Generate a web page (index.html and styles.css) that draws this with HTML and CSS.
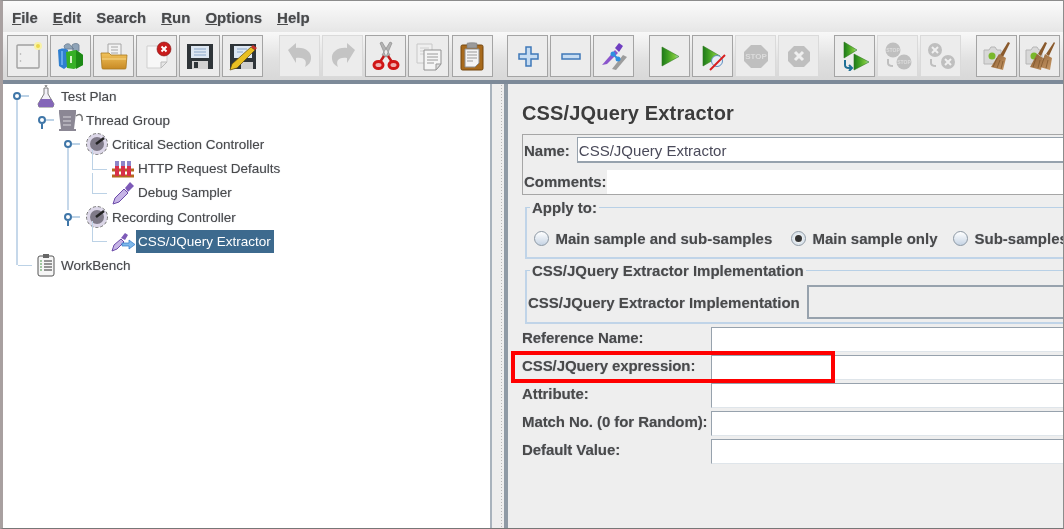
FILE: index.html
```html
<!DOCTYPE html>
<html lang="en">
<head>
<meta charset="utf-8">
<title>JMeter CSS/JQuery Extractor</title>
<link rel="stylesheet" href="styles.css">
</head>
<body>
<svg class="defs" aria-hidden="true"><defs>
  <linearGradient id="play" x1="0" x2="1" y1="0" y2="0"><stop offset="0" stop-color="#1f7a1a"/><stop offset=".35" stop-color="#3f9e22"/><stop offset=".75" stop-color="#7cc63c"/><stop offset="1" stop-color="#a6dcd0"/></linearGradient>
  <linearGradient id="folder" x1="0" x2="0" y1="0" y2="1"><stop offset="0" stop-color="#f2c35c"/><stop offset="1" stop-color="#c88a24"/></linearGradient>
  <linearGradient id="bristle" x1="0" x2="1" y1="0" y2="1"><stop offset="0" stop-color="#8a5c30"/><stop offset="1" stop-color="#c99a68"/></linearGradient>
</defs></svg>
<div class="app">
  <nav class="menubar">
    <span class="menu"><u>F</u>ile</span>
    <span class="menu"><u>E</u>dit</span>
    <span class="menu">Search</span>
    <span class="menu"><u>R</u>un</span>
    <span class="menu"><u>O</u>ptions</span>
    <span class="menu"><u>H</u>elp</span>
  </nav>
  <div class="toolbar">
    <div class="group lead">
      <button class="tool"><svg viewBox="0 0 30 30"><rect x="4" y="4" width="22" height="23" rx="1" fill="#eeeeee" stroke="#a0a0a0" stroke-width="1.400"/><circle cx="7.500" cy="13" r=".8" fill="#aaa"/><circle cx="7.500" cy="20" r=".8" fill="#aaa"/><circle cx="25" cy="5" r="4" fill="#f8f2a8"/><circle cx="25" cy="5" r="2" fill="#ecd84a"/></svg></button>
      <button class="tool"><svg viewBox="0 0 30 30"><path d="M8 5c2-3 6-3 7 0l3 3H9zM16 4c2-2 6-2 7 0v6h-6z" fill="#8fa4b8" stroke="#6c7f92" stroke-width=".8"/><path d="M2 9c3-2 7-2 10 0v16l-4 3-5-3z" fill="#2f7fd0"/><path d="M5 10h2v14H5z" fill="#63a8ea"/><path d="M10 11l10-2 7 5v10l-9 4-7-1z" fill="#36b026"/><path d="M20 9l7 5v10l-7 4z" fill="#1d8a16"/><rect x="14" y="15" width="2" height="7" fill="#d8f3c8"/></svg></button>
      <button class="tool"><svg viewBox="0 0 30 30"><path d="M9 3h13v12H9z" fill="#f3f3f3" stroke="#a6a6a6"/><path d="M12 6h7M12 9h7M12 12h7" stroke="#a6a6a6"/><path d="M2 12h8l2 2h16l-1 13c0 1-1 1-2 1H5c-1 0-2 0-2-1z" fill="url(#folder)" stroke="#a87920" stroke-width=".8"/><path d="M3 18h24" stroke="#f8d88a"/></svg></button>
      <button class="tool"><svg viewBox="0 0 30 30"><path d="M5 5h14l6 5v11l-6 6H5z" fill="#f7f7f7" stroke="#cfcfcf"/><path d="M19 27v-6h6z" fill="#e6e6e6" stroke="#bbb"/><circle cx="22" cy="8" r="7" fill="#c81c1c"/><circle cx="22" cy="8" r="7" fill="none" stroke="#7d1010" stroke-width=".6"/><path d="M19.500 5.500l5 5m0-5l-5 5" stroke="#fff" stroke-width="2"/></svg></button>
      <button class="tool"><svg viewBox="0 0 30 30"><path d="M2 3h26v25H2z" fill="#2f3539"/><rect x="6" y="5" width="18" height="12" fill="#dde7f2"/><path d="M9 8h12M9 11h12M9 14h12" stroke="#8aa6c8"/><rect x="7" y="20" width="16" height="8" fill="#d2d2d2"/><rect x="9" y="21" width="4" height="6" fill="#2f3539"/></svg></button>
      <button class="tool"><svg viewBox="0 0 30 30"><path d="M2 3h26v25H2z" fill="#2f3539"/><rect x="6" y="5" width="18" height="12" fill="#dde7f2"/><path d="M9 8h10M9 11h6" stroke="#8aa6c8"/><rect x="13" y="21" width="12" height="7" fill="#cfcfcf"/><path d="M2 29l2-6L23 6l4 3L9 27z" fill="#e9bf22" stroke="#5f4a0e" stroke-width=".7"/><path d="M23 6l2-2 4 3-2 2z" fill="#c8352b"/></svg></button>
    </div>
    <div class="group">
      <button class="tool off"><svg viewBox="0 0 30 30"><path d="M3 9l8-7v5c9-1 16 4 15 11-.3 3-2 6-6 8 2-5 1-10-9-9v5z" fill="#c4c4c4"/></svg></button>
      <button class="tool off"><svg viewBox="0 0 30 30"><path d="M27 9l-8-7v5C10 6 3 11 4 18c.3 3 2 6 6 8-2-5-1-10 9-9v5z" fill="#c4c4c4"/></svg></button>
      <button class="tool on"><svg viewBox="0 0 30 30"><path d="M9 2l6 14 4-2L11 1zM21 2l-6 14-4-2 8-13z" fill="#b4b4b4" stroke="#8e8e8e" stroke-width=".7"/><path d="M13 15l-4 6M17 15l4 6" stroke="#c41818" stroke-width="2.500"/><ellipse cx="7.500" cy="24" rx="4.500" ry="3.500" fill="#f0b0b0" stroke="#d01616" stroke-width="3"/><ellipse cx="22.500" cy="24" rx="4.500" ry="3.500" fill="#f0b0b0" stroke="#d01616" stroke-width="3"/></svg></button>
      <button class="tool on"><svg viewBox="0 0 30 30"><path d="M3 3h15v19H3z" fill="#efefef" stroke="#c8c8c8"/><path d="M6 7h9M6 10h9M6 13h4" stroke="#d0d0d0"/><path d="M10 9h17v14l-5 6H10z" fill="#f5f5f5" stroke="#919191"/><path d="M13 13h11M13 16h11M13 19h11M13 22h7" stroke="#9a9a9a"/><path d="M22 29v-6h5z" fill="#ddd" stroke="#999"/></svg></button>
      <button class="tool on"><svg viewBox="0 0 30 30"><rect x="4" y="4" width="22" height="25" rx="1.500" fill="#a86a1c" stroke="#74460e"/><path d="M8 8h14v14l-4 4H8z" fill="#f4f4f4" stroke="#8f8f8f"/><path d="M10 2.500c0-1 10-1 10 0V7H10z" fill="#9a9a9a" stroke="#777" stroke-width=".6"/><path d="M10 11h10M10 14h10M10 17h10M10 20h6" stroke="#999"/></svg></button>
    </div>
    <div class="group">
      <button class="tool on"><svg viewBox="0 0 30 30"><path d="M13 6h5v7h7v5h-7v7h-5v-7H6v-5h7z" fill="#c6dcf2" stroke="#3f78b8" stroke-width="1.500"/></svg></button>
      <button class="tool on"><svg viewBox="0 0 30 30"><rect x="6" y="13" width="18" height="5" fill="#c6dcf2" stroke="#3f78b8" stroke-width="1.500"/></svg></button>
      <button class="tool on"><svg viewBox="0 0 30 30"><path d="M3 24L16 9l3 3L8 23z" fill="#8a55cc"/><path d="M16 7l4-5 4 3-4 6z" fill="#6f3ec0"/><path d="M13 28l11-14 4 2-11 13z" fill="#9c9c9c"/><circle cx="14" cy="13" r="2.500" fill="#2f8fe0"/><circle cx="19" cy="18" r="2.500" fill="#2f8fe0"/><path d="M14 13l5 5" stroke="#2f8fe0" stroke-width="2"/></svg></button>
    </div>
    <div class="group">
      <button class="tool on"><svg viewBox="0 0 30 30"><path d="M7 6l17 9.500L7 25z" fill="url(#play)" stroke="#2f7a1c" stroke-width=".6"/></svg></button>
      <button class="tool on"><svg viewBox="0 0 30 30"><path d="M5 5l17 10L5 25z" fill="url(#play)" stroke="#2f7a1c" stroke-width=".6"/><circle cx="19" cy="20" r="5.500" fill="#e6eef6" stroke="#5f8fc0"/><path d="M12 29L27 14" stroke="#d82020" stroke-width="2"/></svg></button>
      <button class="tool off"><svg viewBox="0 0 30 30"><path d="M10 4h10l7 7v9l-7 7H10l-7-7v-9z" fill="#bfbfbf"/><text x="15" y="18" class="stoptext">STOP</text></svg></button>
      <button class="tool off"><svg viewBox="0 0 30 30"><path d="M10 5h10l6 6v9l-6 6H10l-6-6v-9z" fill="#bfbfbf"/><path d="M11 11l8 8m0-8l-8 8" stroke="#efefef" stroke-width="3"/></svg></button>
    </div>
    <div class="group">
      <button class="tool on"><svg viewBox="0 0 30 30"><path d="M4 1l13 8-13 8z" fill="url(#play)" stroke="#2f7a1c" stroke-width=".6"/><path d="M14 13l15 8-15 8z" fill="url(#play)" stroke="#2f7a1c" stroke-width=".6"/><path d="M5 19v5c0 2 2 3 4 3h2M9 24l3 3-3 3" fill="none" stroke="#1f6f96" stroke-width="2"/></svg></button>
      <button class="tool off"><svg viewBox="0 0 30 30"><circle cx="10" cy="9" r="7.500" fill="#bfbfbf"/><circle cx="21" cy="21" r="7.500" fill="#bfbfbf"/><text x="10" y="11" class="stopsmall">STOP</text><text x="21" y="23" class="stopsmall">STOP</text><path d="M5 18v4c0 2 1 3 5 3" fill="none" stroke="#bfbfbf" stroke-width="2"/></svg></button>
      <button class="tool off"><svg viewBox="0 0 30 30"><circle cx="9" cy="9" r="7" fill="#bfbfbf"/><circle cx="22" cy="21" r="7" fill="#bfbfbf"/><path d="M6 6l6 6m0-6l-6 6M19 18l6 6m0-6l-6 6" stroke="#efefef" stroke-width="2"/><path d="M5 18v4c0 2 1 3 5 3" fill="none" stroke="#bfbfbf" stroke-width="2"/></svg></button>
    </div>
    <div class="group">
      <button class="tool on"><svg viewBox="0 0 30 30"><path d="M3 9h5l2-3h4l2 3h4v11l-4 3H3z" fill="#d8d8d8" stroke="#b6b6b6"/><circle cx="11" cy="15" r="3.500" fill="#7ab82c"/><path d="M27 1l2 1-7 14-3-2z" fill="#8a5a2c"/><path d="M18 13l7 4-3 12-12-3z" fill="url(#bristle)"/><path d="M16 17l-4 9M19 19l-3 8M22 20l-2 8" stroke="#7a5228" stroke-width=".7"/></svg></button>
      <button class="tool on"><svg viewBox="0 0 30 30"><path d="M1 9h5l2-3h4l2 3h3v11l-4 3H1z" fill="#d8d8d8" stroke="#b6b6b6"/><circle cx="9" cy="15" r="3.500" fill="#7ab82c"/><path d="M20 1l2 1-6 13-3-2zM29 1l1 1-6 13-3-2z" fill="#8a5a2c"/><path d="M12 13l6 4-2 12-11-3zM20 13l7 4-2 12-10-3z" fill="url(#bristle)"/><path d="M11 17l-3 9M15 19l-2 8M19 17l-3 9M23 19l-2 8" stroke="#7a5228" stroke-width=".7"/></svg></button>
    </div>
  </div>
  <div class="panes">
    <aside class="tree">
      <div class="node l0"><span class="handle"></span><svg class="ico" viewBox="0 0 24 24"><path d="M11 1l1 2 1-2M10 4h4v6l6 10-1 3H5l-1-3 6-10z" fill="#f2f0f7" stroke="#7c7c7c"/><path d="M7 15h10l3 5-1 3H5l-1-3z" fill="#8466b8"/></svg><span class="label">Test Plan</span></div>
      <div class="node l1"><span class="handle"></span><svg class="ico" viewBox="0 0 24 24"><path d="M0 2h17v3l-2 16h2v2H0v-2h2L0 5z" fill="#8b8794"/><path d="M4 9h8M4 13h8M4 17h8" stroke="#d8d6dc"/><path d="M17 8c4-3 7-1 6 5" fill="none" stroke="#777" stroke-width="1.500"/></svg><span class="label">Thread Group</span></div>
      <div class="node l2"><span class="handle"></span><svg class="ico" viewBox="0 0 24 24"><circle cx="12" cy="12" r="10.500" fill="#dcd7e8" stroke="#777" stroke-dasharray="3 2"/><circle cx="12" cy="12" r="7" fill="#7f7a88"/><path d="M11 12l8-6" stroke="#222" stroke-width="2.500"/></svg><span class="label">Critical Section Controller</span></div>
      <div class="node l3 branch"><svg class="ico" viewBox="0 0 24 24"><path d="M1 13h22M1 19h22" stroke="#b4671e" stroke-width="3"/><path d="M6 4v15M12 4v15M18 4v15" stroke="#d8304a" stroke-width="4"/><path d="M6 4v5M12 4v5M18 4v5" stroke="#8d86c8" stroke-width="4"/></svg><span class="label">HTTP Request Defaults</span></div>
      <div class="node l3 branch"><svg class="ico" viewBox="0 0 24 24"><path d="M2 23l2-6 9-9 4 4-9 9z" fill="#c6b4e6" stroke="#6b4aa8"/><path d="M14 7l5-6 4 4-6 6z" fill="#7d5ab8"/></svg><span class="label">Debug Sampler</span></div>
      <div class="node l2"><span class="handle"></span><svg class="ico" viewBox="0 0 24 24"><circle cx="12" cy="12" r="10.500" fill="#dcd7e8" stroke="#777" stroke-dasharray="3 2"/><circle cx="12" cy="12" r="7" fill="#7f7a88"/><path d="M11 12l8-6" stroke="#222" stroke-width="2.500"/></svg><span class="label">Recording Controller</span></div>
      <div class="node l3 branch last"><svg class="ico" viewBox="0 0 24 24"><path d="M1 22l2-6 7-6 3 3-7 7z" fill="#c6b4e6" stroke="#6b4aa8"/><path d="M10 9l4-5 3 2-3 5z" fill="#7d5ab8"/><path d="M11 14h7v-3l6 4.500-6 4.500v-3h-7z" fill="#7fb8ea" stroke="#2f7ac8" stroke-width=".7"/></svg><span class="label selected">CSS/JQuery Extractor</span></div>
      <div class="node l0 wb"><svg class="ico" viewBox="0 0 24 24"><rect x="4" y="3" width="16" height="20" rx="2" fill="#f6f6f6" stroke="#555"/><rect x="9" y="1" width="6" height="4" fill="#666"/><path d="M10 8h8M10 11h8M10 14h8M10 17h8" stroke="#333"/><path d="M6 8h2M6 11h2M6 14h2M6 17h2" stroke="#4a9a4a"/></svg><span class="label">WorkBench</span></div>
    </aside>
    <div class="splitter"></div>
    <main class="editor">
      <h1 class="title">CSS/JQuery Extractor</h1>
      <section class="namebox">
        <div class="namerow"><label class="lab">Name:</label><div class="input named">CSS/JQuery Extractor</div></div>
        <div class="commentrow"><label class="lab">Comments:</label><div class="comment"></div></div>
      </section>
      <fieldset class="fs apply">
        <legend>Apply to:</legend>
        <div class="radios">
          <span class="radio first"><i class="dot"></i>Main sample and sub-samples</span>
          <span class="radio second"><i class="dot checked"></i>Main sample only</span>
          <span class="radio third"><i class="dot"></i>Sub-samples only</span>
        </div>
      </fieldset>
      <fieldset class="fs impl">
        <legend>CSS/JQuery Extractor Implementation</legend>
        <div class="implrow"><label class="lab">CSS/JQuery Extractor Implementation</label><div class="select"></div></div>
      </fieldset>
      <div class="grid">
        <label class="lab">Reference Name:</label><div class="input"></div>
        <label class="lab">CSS/JQuery expression:</label><div class="input"></div>
        <label class="lab">Attribute:</label><div class="input"></div>
        <label class="lab">Match No. (0 for Random):</label><div class="input"></div>
        <label class="lab">Default Value:</label><div class="input"></div>
      </div>
      <div class="highlight"></div>
    </main>
  </div>
</div>
</body>
</html>
```
FILE: styles.css
```css
* { box-sizing: border-box; }
html, body { margin: 0; padding: 0; }
body { width: 1064px; height: 529px; overflow: hidden; background: #fff; font-family: "Liberation Sans", Arial, sans-serif; color: #3a3a3a; }
.defs { position: absolute; width: 0; height: 0; }
.app { width: 1064px; height: 529px; display: flex; flex-direction: column; border-top: 1px solid #8c8c8c; border-left: 3px solid #a8a0a0; border-right: 1px solid #8c8c8c; border-bottom: 1px solid #777; position: relative; overflow: hidden; filter: blur(.35px); }
.menubar { height: 31px; display: flex; align-items: center; padding: 2px 0 0 9px; gap: 15px; background: linear-gradient(#fbfbfb, #e6e6e6); font-size: 15px; font-weight: bold; color: #4a4a4a; text-shadow: 0 0 1px #8d98a8; flex: none; }
.toolbar { height: 48px; display: flex; padding: 3px 0 0 4px; gap: 14.7px; background: linear-gradient(#f8f8f8, #e0e0e0 60%, #d8d8d8); flex: none; }
.group { display: flex; gap: 2.1px; }
.lead { margin-right: 1px; }
.tool { width: 41px; height: 42px; padding: 4px 5px; border: 1px solid #a4a4a4; background: #ececec; display: flex; align-items: center; justify-content: center; }
.tool svg { width: 30px; height: 30px; display: block; flex: none; }
.tool.off { border-color: #dadada; }
.stoptext { font-size: 8px; font-weight: bold; fill: #dcdcdc; text-anchor: middle; font-family: "Liberation Sans", sans-serif; }
.stopsmall { font-size: 5px; font-weight: bold; fill: #dcdcdc; text-anchor: middle; font-family: "Liberation Sans", sans-serif; }
.panes { flex: 1; display: flex; min-height: 0; border-top: 4px solid #7d8a99; }
.tree { width: 489px; flex: none; background: #fff; border-right: 2px solid #a9b3bd; padding: 0 0 0 2px; font-size: 13.5px; color: #4a4a4a; }
.node { height: 24.200px; display: flex; align-items: center; position: relative; }
.ico { width: 24px; height: 24px; flex: none; }
.label { margin-left: 3px; text-shadow: 0 0 1px #a8b0c0; white-space: nowrap; }
.selected { background: #3d6a8e; color: #fff; padding: 4px 3px 4px 2px; margin-left: 1px; text-shadow: none; }
.handle { width: 8px; height: 8px; border: 2px solid #3f76a8; border-radius: 50%; background: #fff; flex: none; position: absolute; left: -21px; top: 8px; }
.handle::after { content: ""; position: absolute; left: 6px; top: 1px; width: 8px; height: 2px; background: #bcd2e6; }
.handle::before { content: ""; position: absolute; left: 1px; top: 6px; width: 2px; height: 5px; background: #3f76a8; }
.l0 { margin-left: 29px; }
.l1 { margin-left: 54px; }
.l2 { margin-left: 80px; }
.l3 { margin-left: 106px; }
.branch::before { content: ""; position: absolute; left: -19px; top: -8px; width: 14px; height: 20px; border-left: 1px solid #bcd2e6; border-bottom: 1px solid #bcd2e6; }
.l2::after { content: ""; position: absolute; left: -18px; top: 16px; width: 2px; height: 62px; background: #c6d8ea; }
.l2 ~ .l2::after, .wb::after { display: none; }
.l0:first-child::after { content: ""; position: absolute; left: -18px; top: 16px; width: 2px; height: 165px; background: #c6d8ea; }
.wb::before { content: ""; position: absolute; left: -16px; top: 12px; width: 14px; height: 1px; background: #bcd2e6; }
.splitter { width: 16px; flex: none; background: #eeeeee radial-gradient(#b8b8b8 35%, transparent 40%) 8px 0 / 3px 3px repeat-y; border-right: 4px solid #8f9aa5; }
.editor { flex: 1; min-width: 0; background: #eeeeee; padding: 0 0 0 14px; position: relative; overflow: hidden; font-size: 15px; font-weight: bold; }
.title { margin: 17px 0 0; font-size: 20px; line-height: 24px; font-weight: bold; color: #3c3c3c; letter-spacing: .15px; white-space: nowrap; }
.lab { color: #4a4a4a; white-space: nowrap; text-shadow: 0 0 1px #a0a8b8; }
.namebox { margin-top: 9px; height: 61px; width: 560px; border: 1px solid #a6a6a6; border-right: none; padding: 2px 0 0 1px; }
.namerow { display: flex; align-items: center; gap: 7px; height: 26px; }
.commentrow { display: flex; align-items: center; margin-top: 7px; height: 24px; }
.commentrow .lab { margin-bottom: 2px; }
.comment { flex: 1; height: 24px; background: #fff; }
.input { background: #fff; border: 1px solid #97a2ad; border-right: none; border-bottom-width: 2px; height: 26px; flex: 1; }
.named { font-weight: normal; color: #4a4a5a; font-size: 15px; line-height: 25px; padding-left: 1px; white-space: nowrap; }
.fs { margin: 0 0 0 3px; padding: 0; border: none; border-top: 1px solid #b8d0e6; border-left: 2px solid #c0d4e8; border-bottom: 2px solid #c0d4e8; width: 560px; min-width: 0; }
.fs legend { padding: 0 2px; margin-left: 3px; font-size: 15px; font-weight: bold; color: #4a4a4a; text-shadow: 0 0 1px #a0a8b8; white-space: nowrap; }
.apply { margin-top: 4px; height: 60px; }
.radios { display: flex; align-items: center; padding: 14px 0 0 7px; }
.radio { display: flex; align-items: center; gap: 6.500px; white-space: nowrap; text-shadow: 0 0 1px #a0a8b8; color: #4a4a4a; flex: none; }
.first { width: 257px; }
.second { width: 162px; }
.dot { width: 15px; height: 15px; border-radius: 50%; border: 1px solid #8c98a4; background: linear-gradient(#ffffff, #c6d4e4); flex: none; position: relative; }
.checked { background: #f0f0f0; box-shadow: inset 0 0 0 2px #dde6ee; }
.checked::after { content: ""; position: absolute; left: 3px; top: 3px; width: 7px; height: 7px; border-radius: 50%; background: #333; }
.impl { margin-top: 3px; height: 62px; }
.implrow { display: flex; align-items: center; gap: 7px; padding: 6px 0 0 1px; }
.select { flex: 1; height: 34px; border: 2px solid #97a2ad; border-right: none; background: #eeeeee; }
.grid { display: grid; grid-template-columns: 189px 360px; grid-auto-rows: 25px; row-gap: 3px; margin-top: 3px; align-items: center; letter-spacing: -.08px; }
.grid .input { height: 25px; border-bottom: 1px solid #dfe5ea; }
.grid .lab { position: relative; top: -2px; }
.highlight { position: absolute; left: 3px; top: 267px; width: 324px; height: 32px; border: 4px solid #f00; }
```
